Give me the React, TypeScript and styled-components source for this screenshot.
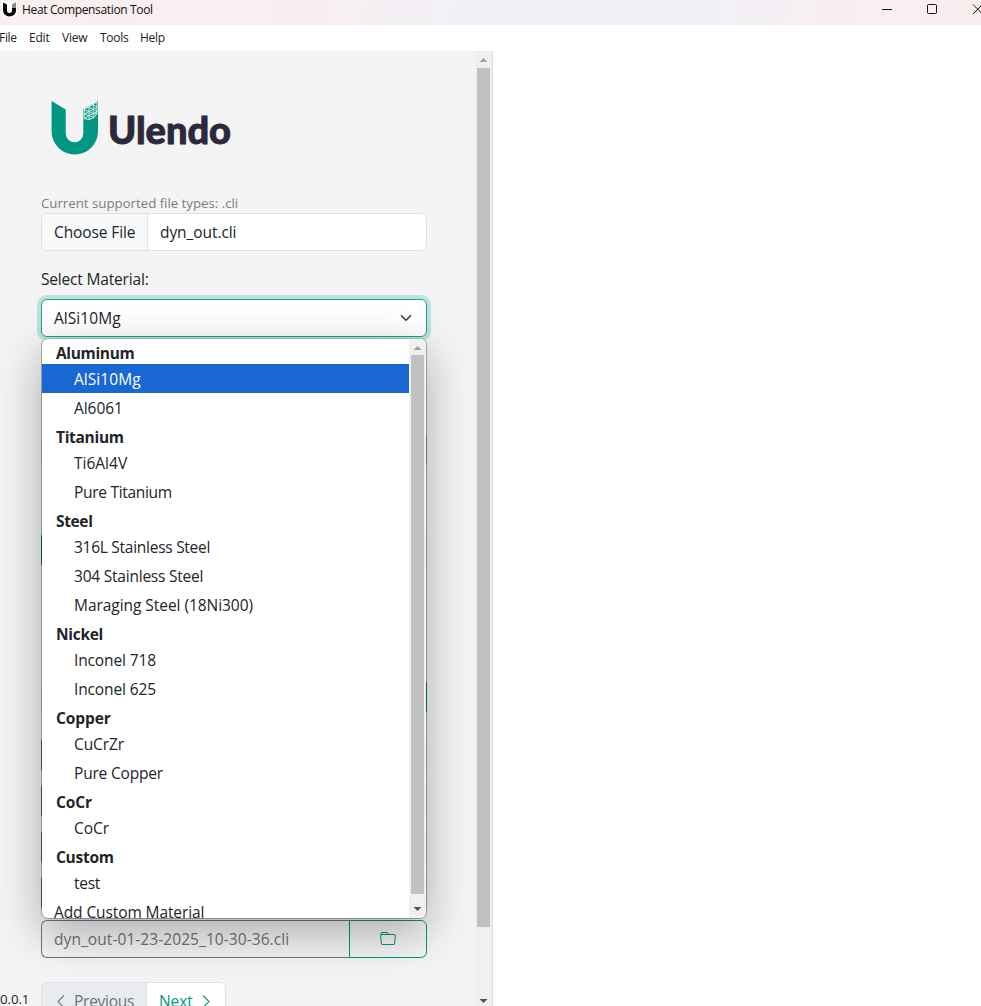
import React from "react";
import styled, { createGlobalStyle } from "styled-components";

const teal = "#009781";

const GlobalStyle = createGlobalStyle`
  *, *::before, *::after { box-sizing: border-box; }
  html, body { margin: 0; height: 100%; background: #fff; overflow: hidden; }
  body { font-family: "Open Sans", "Noto Sans", sans-serif; font-size: 15.5px; color: #212529; }
`;

const Window = styled.div`
  display: flex;
  flex-direction: column;
  width: 981px;
  height: 1006px;
  overflow: hidden;
`;

const TitleBar = styled.header`
  flex: none;
  display: flex;
  align-items: center;
  height: 25px;
  padding-left: 2px;
  background: linear-gradient(100deg, #f9efee 0%, #f9eef1 27%, #f2f0f7 48%, #f2f0f7 72%, #f9eef1 88%, #f9eeee 100%);
`;

const AppIcon = styled.svg`
  width: 15px;
  height: 16px;
  margin: -7px 5px 0 0;
  background: #fff;
`;

const AppTitle = styled.span`
  flex: 1;
  margin-top: -5px;
  font-size: 12px;
  letter-spacing: -0.35px;
  line-height: 16px;
  color: #111;
`;

const WindowControls = styled.svg`
  flex: none;
  width: 110px;
  height: 25px;
`;

const MenuBar = styled.nav`
  flex: none;
  display: flex;
  align-items: center;
  gap: 12px;
  height: 26px;
  margin-left: -1px;
  font-size: 12px;
  line-height: 16px;
  color: #222;
`;

const MenuItem = styled.span<{ $width: number; $track: number }>`
  width: ${(p) => p.$width}px;
  letter-spacing: ${(p) => p.$track}px;
  white-space: nowrap;
`;

const Panel = styled.main`
  flex: 1;
  min-height: 0;
  display: flex;
  width: 493px;
  border-right: 1px solid #dcdcdc;
  background: #f4f4f4;
  overflow: hidden;
`;

const Content = styled.div`
  flex: 1;
  min-width: 0;
  padding: 48px 48px 0 41px;
`;

const ScrollTrack = styled.div<{ $bottom: number }>`
  flex: none;
  display: flex;
  flex-direction: column;
  align-items: center;
  width: 17px;
  padding-bottom: ${(p) => p.$bottom}px;
  background: #f0f0f0;
`;

const ScrollArrow = styled.svg<{ $height: number }>`
  flex: none;
  width: 9px;
  height: ${(p) => p.$height}px;
`;

const Thumb = styled.div<{ $height: number }>`
  flex: none;
  width: 13px;
  height: ${(p) => p.$height}px;
  background: #c1c1c1;
`;

const Spacer = styled.div`
  flex: 1;
`;

const Brand = styled.div`
  display: flex;
  align-items: flex-start;
  height: 95px;
  padding-left: 10px;
`;

const BrandMark = styled.svg`
  width: 48px;
  height: 56px;
`;

const BrandName = styled.span`
  margin: 5px 0 0 9px;
  font-family: Lato, sans-serif;
  font-weight: 900;
  font-size: 38px;
  line-height: 50px;
  letter-spacing: -0.05px;
  color: #2b293b;
  -webkit-text-stroke: 0.9px #2b293b;
`;

const Hint = styled.div`
  height: 19px;
  font-size: 13.3px;
  line-height: 18px;
  letter-spacing: -0.03px;
  color: #7a7e83;
  white-space: nowrap;
`;

const FileInput = styled.div`
  display: flex;
  height: 38px;
  border: 1px solid #dee2e6;
  border-radius: 6px;
  background: #fff;
  line-height: 36px;
  overflow: hidden;
`;

const FileButton = styled.span`
  width: 106px;
  padding-left: 12px;
  border-right: 1px solid #dee2e6;
  background: #f8f9fa;
  letter-spacing: -0.1px;
`;

const FileName = styled.span`
  padding-left: 12px;
  letter-spacing: -0.07px;
`;

const Label = styled.div`
  height: 48px;
  padding-top: 17px;
  line-height: 22px;
  letter-spacing: -0.18px;
`;

const SelectWrap = styled.div`
  position: relative;
  z-index: 2;
`;

const Select = styled.div`
  display: flex;
  align-items: center;
  justify-content: space-between;
  height: 38px;
  padding: 0 14px 0 12px;
  border: 1px solid #18a38d;
  border-radius: 6px;
  background: #fff;
  box-shadow: 0 0 0 4px #bce2db;
  letter-spacing: 0.05px;
`;

const Popup = styled.div`
  position: absolute;
  top: 39px;
  left: 0;
  display: flex;
  width: 386px;
  height: 581px;
  border: 1px solid rgba(0, 0, 0, 0.28);
  border-top-color: rgba(0, 0, 0, 0.12);
  border-radius: 7px;
  background: #fff;
  background-clip: padding-box;
  box-shadow: 0 14px 46px rgba(0, 0, 0, 0.3);
  overflow: hidden;
`;

const OptionList = styled.div`
  flex: 1;
  overflow: hidden;
  white-space: nowrap;
`;

const GroupName = styled.div<{ $track: number }>`
  height: 26px;
  padding: 3px 0 0 14px;
  font-weight: 700;
  line-height: 24px;
  letter-spacing: ${(p) => p.$track}px;

  &:first-child {
    height: 25px;
    padding-top: 2px;
  }
`;

const Option = styled.div<{ $track: number; $selected?: boolean }>`
  height: 29px;
  padding-left: 32px;
  line-height: 31px;
  letter-spacing: ${(p) => p.$track}px;
  background: ${(p) => (p.$selected ? "#1967d2" : "transparent")};
  color: ${(p) => (p.$selected ? "#fff" : "#212529")};
`;

const AddOption = styled(Option)`
  padding-left: 12px;
`;

const Fields = styled.div`
  display: flex;
  flex-direction: column;
`;

const Field = styled.div<{ $gap: number; $left: string; $right: string }>`
  height: 38px;
  margin-top: ${(p) => p.$gap}px;
  border: 1px solid #dee2e6;
  border-left-color: ${(p) => p.$left};
  border-right-color: ${(p) => p.$right};
  border-radius: 6px;
`;

const OutputRow = styled.div`
  display: flex;
  height: 38px;
  margin-top: 8px;
  line-height: 36px;
`;

const OutputName = styled.div`
  width: 308px;
  padding-left: 12px;
  border: 1px solid #6c757d;
  border-right: 0;
  border-radius: 6px 0 0 6px;
  color: #6c757d;
  letter-spacing: 0.07px;
`;

const BrowseButton = styled.div`
  flex: 1;
  display: flex;
  align-items: center;
  justify-content: center;
  border: 1px solid ${teal};
  border-radius: 0 6px 6px 0;
`;

const Footer = styled.div`
  display: flex;
  margin: 24px 0 0 -41px;
`;

const Version = styled.span`
  width: 41px;
  padding-top: 8px;
  font-size: 13.3px;
  line-height: 18px;
  letter-spacing: -0.1px;
`;

const PageButton = styled.div<{ $disabled?: boolean }>`
  display: flex;
  align-items: center;
  gap: 9px;
  width: ${(p) => (p.$disabled ? 106 : 79)}px;
  height: 38px;
  padding-left: ${(p) => (p.$disabled ? 15 : 12)}px;
  border: 1px solid #dee2e6;
  border-left-width: ${(p) => (p.$disabled ? 1 : 0)}px;
  border-radius: ${(p) => (p.$disabled ? "6px 0 0 6px" : "0 6px 6px 0")};
  background: ${(p) => (p.$disabled ? "#e9ecef" : "#fff")};
  color: ${(p) => (p.$disabled ? "#6c757d" : teal)};
  letter-spacing: ${(p) => (p.$disabled ? -0.25 : -0.1)}px;
`;

type Entry = { name: string; track: number };
type Group = Entry & { options: Entry[] };

const groups: Group[] = [
  { name: "Aluminum", track: -0.35, options: [{ name: "AlSi10Mg", track: 0.05 }, { name: "Al6061", track: -0.05 }] },
  { name: "Titanium", track: -0.3, options: [{ name: "Ti6Al4V", track: 0 }, { name: "Pure Titanium", track: -0.3 }] },
  {
    name: "Steel",
    track: -0.35,
    options: [
      { name: "316L Stainless Steel", track: -0.27 },
      { name: "304 Stainless Steel", track: -0.22 },
      { name: "Maraging Steel (18Ni300)", track: -0.05 },
    ],
  },
  { name: "Nickel", track: -0.3, options: [{ name: "Inconel 718", track: -0.13 }, { name: "Inconel 625", track: -0.13 }] },
  { name: "Copper", track: -0.1, options: [{ name: "CuCrZr", track: -0.1 }, { name: "Pure Copper", track: -0.18 }] },
  { name: "CoCr", track: -0.1, options: [{ name: "CoCr", track: -0.05 }] },
  { name: "Custom", track: -0.27, options: [{ name: "test", track: -0.3 }] },
];

const menus = [
  { name: "File", width: 18, track: -0.3 },
  { name: "Edit", width: 21, track: -0.2 },
  { name: "View", width: 26, track: -0.2 },
  { name: "Tools", width: 28, track: -0.25 },
  { name: "Help", width: 26, track: -0.25 },
];

const Up = ({ height }: { height: number }) => (
  <ScrollArrow $height={height} viewBox={`0 0 9 ${height}`}><path d="M.5 11h8l-4-4z" fill="#a0a0a0" /></ScrollArrow>
);
const Down = () => (
  <ScrollArrow $height={17} viewBox="0 0 9 17"><path d="M.5 7h8l-4 4z" fill="#505050" /></ScrollArrow>
);

export default function App() {
  return (
    <Window>
      <GlobalStyle />
      <TitleBar>
        <AppIcon viewBox="0 0 15 16">
          <path d="M1 1.500 5 3.500V9.500a2.400 2.400 0 0 0 5 0V7H14V9.500a6.500 6 0 0 1-13 0z" fill="#080808" />
          <path d="M10 3.500 14 1v6h-4z" fill="#8b8b8b" />
        </AppIcon>
        <AppTitle>Heat Compensation Tool</AppTitle>
        <WindowControls viewBox="0 0 110 25" fill="none" stroke="#111" strokeWidth="1">
          <path d="M11 9.500h10" />
          <rect x="56.500" y="4.500" width="9" height="9" rx="1" />
          <path d="m102 4.500 9.500 9.500m0-9.500L102 14" />
        </WindowControls>
      </TitleBar>
      <MenuBar>
        {menus.map((m) => (
          <MenuItem key={m.name} $width={m.width} $track={m.track}>{m.name}</MenuItem>
        ))}
      </MenuBar>
      <Panel>
        <Content>
          <Brand>
            <BrandMark viewBox="0 0 48 56">
              <path d="M.6 2 14.700 10.500V34.500a8.800 8.800 0 0 0 17.600 0V20.500L39 22.500l8-5.500V32.500a23.200 22.900 0 0 1-46.400 0z" fill={teal} />
              <path d="M32.300 10.500 47 2v17l-8 4-6.700-2.500z" fill={teal} />
              <path
                d="M33.300 19.500v-9L46 3v11.500l-3 4-5 2zM38 8v12M42.300 5.500v13M33.500 15l4.500-2.500L46 8.500M33.500 19.500l4.500-3 8-4M33.500 11l4.500 1.500 4.500 2.500 3.500-.5M33.500 15l4.500 1.500 4.500 2M38 8l4.300 2.500L46 12M42.300 5.500 46 8.500"
                fill="none" stroke="#e6f4f1" strokeWidth="0.950"
              />
            </BrandMark>
            <BrandName>Ulendo</BrandName>
          </Brand>
          <Hint>Current supported file types: .cli</Hint>
          <FileInput>
            <FileButton>Choose File</FileButton>
            <FileName>dyn_out.cli</FileName>
          </FileInput>
          <Label>Select Material:</Label>
          <SelectWrap>
            <Select>
              AlSi10Mg
              <svg width="12" height="12" viewBox="0 0 16 16" fill="none" stroke="#343a40" strokeWidth="2" strokeLinecap="round" strokeLinejoin="round">
                <path d="m2 5 6 6 6-6" />
              </svg>
            </Select>
            <Popup>
              <OptionList>
                {groups.map((g) => (
                  <React.Fragment key={g.name}>
                    <GroupName $track={g.track}>{g.name}</GroupName>
                    {g.options.map((o) => (
                      <Option key={o.name} $track={o.track} $selected={o.name === "AlSi10Mg"}>{o.name}</Option>
                    ))}
                  </React.Fragment>
                ))}
                <AddOption $track={-0.1}>Add Custom Material</AddOption>
              </OptionList>
              <ScrollTrack $bottom={1}>
                <Up height={16} />
                <Thumb $height={539} />
                <Spacer />
                <Down />
              </ScrollTrack>
            </Popup>
          </SelectWrap>
          <Fields>
            <Field $gap={94} $left="#dee2e6" $right="#adb5bd" />
            <Field $gap={62} $left={teal} $right="#dee2e6" />
            <Field $gap={109} $left="#dee2e6" $right={teal} />
            <Field $gap={20} $left="#6c757d" $right="#dee2e6" />
            <Field $gap={8} $left="#6c757d" $right="#dee2e6" />
            <Field $gap={8} $left="#6c757d" $right="#dee2e6" />
            <Field $gap={8} $left="#6c757d" $right="#dee2e6" />
          </Fields>
          <OutputRow>
            <OutputName>dyn_out-01-23-2025_10-30-36.cli</OutputName>
            <BrowseButton>
              <svg width="16" height="16" viewBox="0 0 16 16" fill={teal}>
                <path d="M.54 3.870.5 3a2 2 0 0 1 2-2h3.672a2 2 0 0 1 1.414.586l.828.828A2 2 0 0 0 9.828 3h3.982a2 2 0 0 1 1.992 2.181l-.637 7A2 2 0 0 1 13.174 14H2.826a2 2 0 0 1-1.991-1.819l-.637-7a2 2 0 0 1 .342-1.310zM2.190 4a1 1 0 0 0-.996 1.090l.637 7a1 1 0 0 0 .995.910h10.348a1 1 0 0 0 .995-.910l.637-7A1 1 0 0 0 13.810 4zm4.690-1.707A1 1 0 0 0 6.172 2H2.500a1 1 0 0 0-1 .981l.006.139q.323-.119.684-.120h5.396z" />
              </svg>
            </BrowseButton>
          </OutputRow>
          <Footer>
            <Version>0.0.1</Version>
            <PageButton $disabled>
              <svg width="8" height="13" viewBox="0 0 8 13" fill="none" stroke="currentColor" strokeWidth="1.100"><path d="M7 .5 1 6.500l6 6" /></svg>
              Previous
            </PageButton>
            <PageButton>
              Next
              <svg width="8" height="13" viewBox="0 0 8 13" fill="none" stroke="currentColor" strokeWidth="1.100"><path d="m1 .5 6 6-6 6" /></svg>
            </PageButton>
          </Footer>
        </Content>
        <ScrollTrack $bottom={0}>
          <Up height={17} />
          <Thumb $height={859} />
          <Spacer />
          <ScrollArrow $height={14} viewBox="0 0 9 14"><path d="M.5 7h8l-4 4z" fill="#505050" /></ScrollArrow>
        </ScrollTrack>
      </Panel>
    </Window>
  );
}
